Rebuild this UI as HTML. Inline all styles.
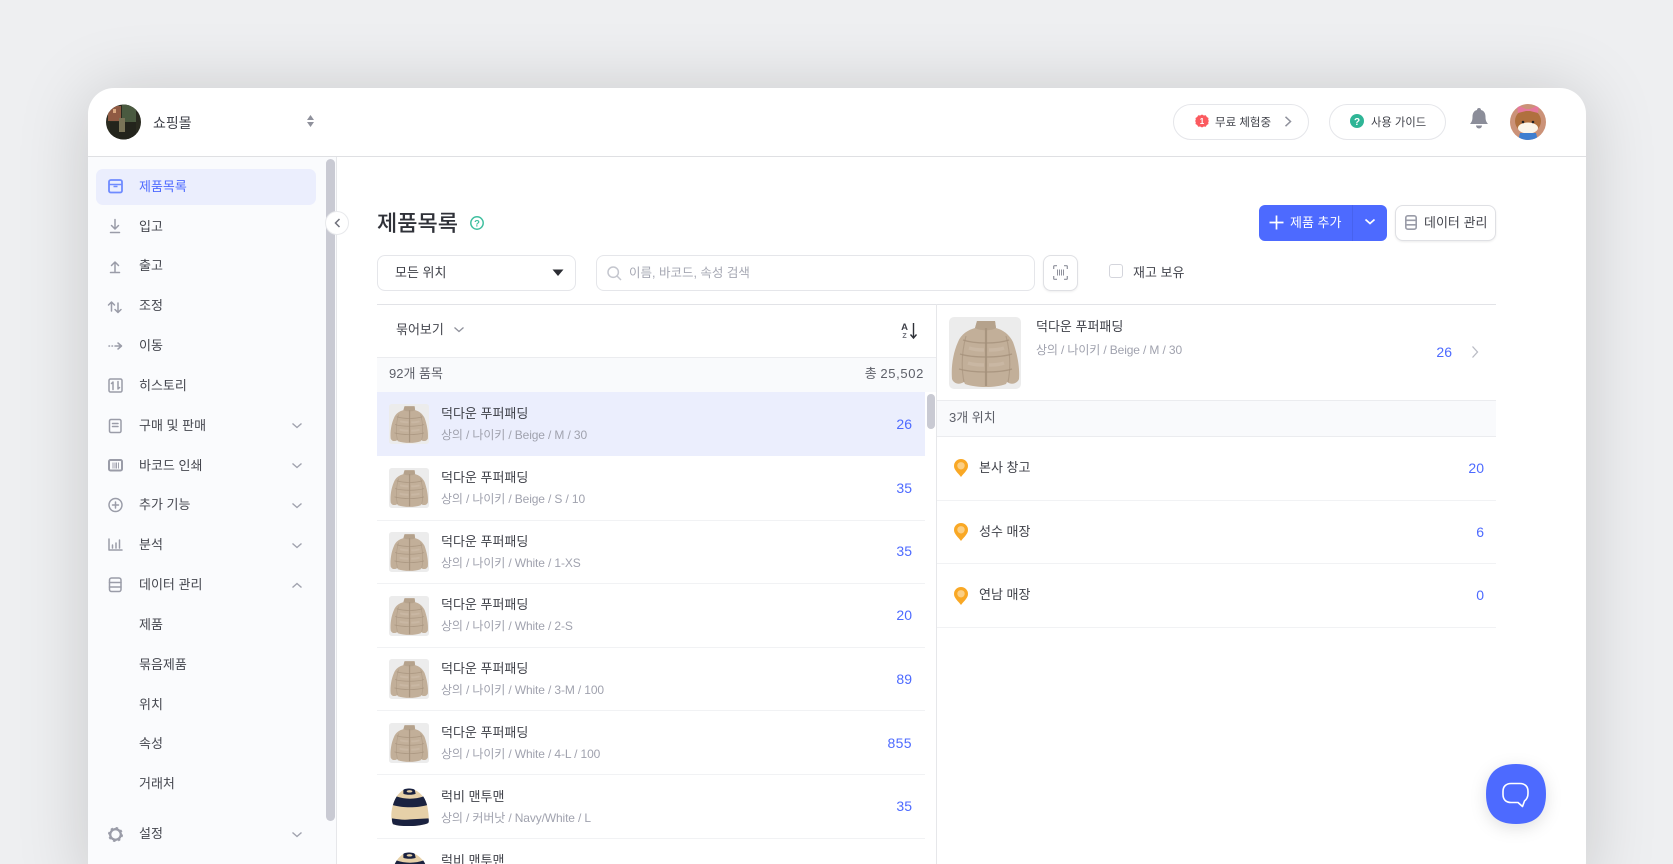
<!DOCTYPE html>
<html lang="ko"><head><meta charset="utf-8"><title>제품목록</title>
<style>
*{box-sizing:border-box;margin:0;padding:0}
html,body{width:1673px;height:864px;overflow:hidden;background:#eeeff1}
body{position:relative;font-family:"Liberation Sans","Noto Sans CJK KR",sans-serif;color:#3f4149;font-size:13px}
.a{position:absolute}
.t{position:absolute;white-space:nowrap;line-height:20px;height:20px}
.r{text-align:right}
#card{left:88px;top:88px;width:1498px;height:800px;background:#fff;border-radius:26px;box-shadow:0 4px 70px rgba(0,0,0,.17);overflow:hidden}
#layer{left:0;top:0;width:1673px;height:864px;overflow:hidden}
.line{position:absolute;background:#e6e7ea}
.m{font-size:13px;color:#44464e;left:139px}
.sub{font-size:12px;color:#a0a2ae;letter-spacing:-.13px}
.num{font-size:14px;color:#4d6aff;text-align:right}
.box{position:absolute;background:#fff;border:1px solid #e5e6ea;border-radius:8px}
svg{position:absolute;overflow:visible}
.ic{fill:none;stroke:#9a9ca8;stroke-width:1.5;stroke-linecap:round;stroke-linejoin:round}
</style></head><body>
<svg width="0" height="0" style="position:absolute"><defs>
<symbol id="jk" viewBox="0 0 72 72">
<rect width="72" height="72" rx="5" fill="#ececec"/>
<path d="M28 4 L46 4 L47 11 C54 13 60 17 64 25 C68 36 71 50 70 62 C68 67 62 68 58 65 L57 67 C46 71 28 71 16 67 L15 65 C10 68 5 67 3 62 C2 50 4 36 9 25 C12 17 19 13 26 11 Z" fill="#c2af99"/>
<path d="M28 4 L46 4 L47 11 C43 14 31 14 26 11 Z" fill="#b5a28c"/>
<path d="M37 11 V69" stroke="#a8957f" stroke-width="2.200"/>
<path d="M14 23 C26 27 48 27 60 23 M11 37 C24 41 50 41 63 37 M10 52 C24 56 50 56 63 52" stroke="#a38f79" stroke-width="1.300" fill="none" opacity=".75"/>
<path d="M17 19 C13 34 12 50 15 65 M57 19 C61 34 62 50 59 65" stroke="#a38f79" stroke-width="1.100" fill="none" opacity=".6"/>
<path d="M20 31 C26 33 31 33 35 33 M40 33 C45 33 50 33 55 31 M19 46 C25 48 31 48 35 48 M40 48 C45 48 50 48 55 46" stroke="#d2c2af" stroke-width="3.500" fill="none" opacity=".45"/>
</symbol>
<symbol id="rg" viewBox="0 0 40 40">
<path d="M13 2 H25 C33 6 38 13 39 24 C40 30 40 35 39 37 C30 41 9 41 2 38 C0 33 0 28 1 22 C3 12 7 6 13 2 Z" fill="#e6d0a8"/>
<path d="M6 9 C14 12 26 12 34 9 C36 12 37 15 38 18 C28 21 12 21 2 18 C3 15 4 12 6 9 Z" fill="#1a2240"/>
<path d="M1 32 C8 33 14 34 20 33 L39.500 32 C40 34 40 36 39 37 C30 41 9 41 2 38 C1 36 1 34 1 32 Z" fill="#1a2240"/>
<path d="M13 2 C15 0 23 0 25 2 L26 6 C23 7.500 16 7.500 13 6 Z" fill="#1a2240"/>
<ellipse cx="19.500" cy="3.500" rx="3" ry="1.300" fill="#e6d0a8"/>
</symbol>
<symbol id="pin" viewBox="0 0 14 18">
<path d="M7 18 C4 14 0 11 0 7 A7 7 0 0 1 14 7 C14 11 10 14 7 18Z" fill="#f9a825"/><circle cx="7" cy="6.800" r="3.700" fill="#fbcf85"/>
</symbol>
<clipPath id="c1"><circle cx="123.500" cy="122" r="17.500"/></clipPath>
<clipPath id="c2"><circle cx="1528" cy="122" r="18"/></clipPath>
</defs></svg>

<div class="a" id="card"></div>
<div class="a" id="layer">

<!-- header -->
<div class="line" style="left:88px;top:156px;width:1498px;height:1px;background:#dfe0e3"></div>
<svg style="left:0;top:0" width="1673" height="200">
<g clip-path="url(#c1)"><rect x="105" y="104" width="37" height="36" fill="#2a2b20"/><rect x="108" y="106" width="13" height="15" fill="#8f5a43"/><rect x="122" y="104" width="14" height="20" fill="#4a5a40"/><rect x="110" y="122" width="26" height="18" fill="#23241c"/><rect x="119" y="118" width="6" height="14" fill="#7a7458"/><rect x="113" y="109" width="3" height="4" fill="#d9a77f"/></g>
<path d="M310.500 115l3.500 5h-7zM310.500 127l3.500-5h-7z" fill="#8f919c"/>
<g clip-path="url(#c2)"><rect x="1510" y="104" width="36" height="36" fill="#cb9278"/><ellipse cx="1528" cy="121" rx="13" ry="12" fill="#b0703e"/><path d="M1517 105l9 4h4l9-4-1 8-8-2h-4l-8 2z" fill="#e5789c"/><ellipse cx="1528" cy="128" rx="10" ry="5.500" fill="#fbf6ea"/><path d="M1520 133h16l2 8h-20z" fill="#3f7fd0"/><circle cx="1523" cy="122" r="1.300" fill="#222"/><circle cx="1533" cy="122" r="1.300" fill="#222"/></g>
</svg>
<div class="t" style="left:153px;top:113px;font-size:14px;color:#3f4149">쇼핑몰</div>

<div class="box" style="left:1173px;top:104px;width:136px;height:36px;border-radius:18px"></div>
<svg style="left:1195px;top:114px" width="14" height="14"><path d="M7 0.500l1.800 1 2-.3 1 1.800 1.700 1-.3 2 .8 1-.8 1 .3 2-1.700 1-1 1.800-2-.3-1.800 1-1.800-1-2 .3-1-1.800-1.700-1 .3-2-.8-1 .8-1-.3-2 1.700-1 1-1.800 2 .3z" fill="#fb5a5f"/><text x="7" y="10" text-anchor="middle" font-size="8" font-weight="700" fill="#fff" font-family="Liberation Sans">1</text></svg>
<div class="t" style="left:1215px;top:113px;font-size:11.500px;color:#3f4149">무료 체험중</div>
<svg style="left:1284px;top:116px" width="8" height="11"><path d="M1.500 .8l5 4.700-5 4.700" fill="none" stroke="#8f919c" stroke-width="1.500"/></svg>

<div class="box" style="left:1329px;top:104px;width:117px;height:36px;border-radius:18px"></div>
<svg style="left:1350px;top:114px" width="14" height="14"><circle cx="7" cy="7" r="7" fill="#2fb596"/><text x="7" y="11" text-anchor="middle" font-size="10" font-weight="700" fill="#fff" font-family="Liberation Sans">?</text></svg>
<div class="t" style="left:1371px;top:113px;font-size:11.300px;color:#3f4149">사용 가이드</div>
<svg style="left:1470px;top:108px" width="18" height="22"><path d="M9 0c1.200 0 2 .8 2 2 3.200.8 4.500 3.500 4.500 6.800 0 3.700 .8 5.200 2.500 7.200H0c1.700-2 2.500-3.500 2.500-7.200C2.500 5.500 3.800 2.800 7 2c0-1.200.8-2 2-2z" fill="#8b8d99"/><path d="M6 17.500h6a3 3 0 0 1-6 0z" fill="#8b8d99"/></svg>

<!-- sidebar -->
<div class="a" style="left:88px;top:157px;width:248px;height:707px;background:#fafbfd"></div>
<div class="line" style="left:336px;top:157px;width:1px;height:707px"></div>
<div class="a" style="left:96px;top:169px;width:220px;height:36px;background:#ebeefd;border-radius:7px"></div>
<div class="a" style="left:326px;top:159px;width:9px;height:662px;background:#c9cad3;border-radius:5px"></div>
<div class="a" style="left:325px;top:211px;width:24px;height:24px;background:#fff;border:1px solid #e8e9ec;border-radius:50%"></div>
<svg style="left:334px;top:218px" width="7" height="10"><path d="M5.500 1L1.500 5l4 4" fill="none" stroke="#6f717b" stroke-width="1.500"/></svg>

<div class="t m" style="top:177px;color:#4d6aff">제품목록</div>
<div class="t m" style="top:217px">입고</div>
<div class="t m" style="top:256px">출고</div>
<div class="t m" style="top:296px">조정</div>
<div class="t m" style="top:336px">이동</div>
<div class="t m" style="top:376px">히스토리</div>
<div class="t m" style="top:416px">구매 및 판매</div>
<div class="t m" style="top:456px">바코드 인쇄</div>
<div class="t m" style="top:495px">추가 기능</div>
<div class="t m" style="top:535px">분석</div>
<div class="t m" style="top:575px">데이터 관리</div>
<div class="t m" style="top:615px">제품</div>
<div class="t m" style="top:655px">묶음제품</div>
<div class="t m" style="top:695px">위치</div>
<div class="t m" style="top:734px">속성</div>
<div class="t m" style="top:774px">거래처</div>
<div class="t m" style="top:824px">설정</div>

<svg style="left:0;top:0" width="340" height="864">
<g fill="none" stroke="#6f8bff" stroke-width="1.800" stroke-linejoin="round"><rect x="109" y="180" width="13" height="12.500" rx="1.800"/><path d="M109 184.500h13M113.500 186.500h4" stroke-width="1.400"/></g>
<g class="ic">
<path d="M115 219.500v9.500M111.500 225.500l3.500 3.500 3.500-3.500M110.500 232.500h9"/>
<path d="M115 271.500v-9.500M111.500 265.500l3.500-3.500 3.500 3.500M110.500 272.500h9"/>
<path d="M111.500 311v-9M108.500 305l3-3 3 3M118 303v9.500M115 309.500l3 3 3-3"/>
<path d="M109 346h.5M112 346h.5M115 346h6M118 343l3.500 3-3.500 3"/>
<rect x="109" y="379" width="13" height="13" rx="1.500"/><path d="M113 389.500v-7.500l-1.500 1.500M118 381.500v7.500l1.500-1.500"/>
<rect x="109.500" y="419.500" width="11.500" height="13" rx="1.500"/><path d="M112.500 423.500h5.500M112.500 426.500h5.500"/>
<rect x="109" y="460" width="13" height="10.500" rx="1.500" stroke-width="2"/>
<circle cx="115.500" cy="505" r="6.500"/><path d="M115.500 502v6M112.500 505h6"/>
<path d="M109 539v11h13M112.500 548v-3M116 548v-5M119.500 548v-8"/>
<rect x="109.500" y="578" width="11.500" height="13.500" rx="2"/><path d="M109.500 582.500h11.500M109.500 587h11.500"/>
</g>
<circle cx="115.500" cy="834.500" r="5.300" fill="none" stroke="#9a9ca8" stroke-width="2.300"/>
<circle cx="115.500" cy="834.500" r="6.800" fill="none" stroke="#9a9ca8" stroke-width="1.400" stroke-dasharray="2.500 2.830"/>
<path d="M113 462.500v6M115 462.500v6M116.500 462.500v6M118.500 462.500v6" stroke="#a0a2ae" stroke-width="1"/>
<g fill="none" stroke="#a0a2ae" stroke-width="1.400">
<path d="M292.500 423.500l4.500 4 4.500-4M292.500 463.500l4.500 4 4.500-4M292.500 503.500l4.500 4 4.500-4M292.500 543.500l4.500 4 4.500-4M292.500 587.500l4.500-4 4.500 4M292.500 832.500l4.500 4 4.500-4"/>
</g>
</svg>

<!-- page head -->
<div class="t" style="left:377px;top:209px;height:30px;line-height:30px;font-size:22px;font-weight:500;color:#2f3138">제품목록</div>
<svg style="left:470px;top:216px" width="14" height="14"><circle cx="7" cy="7" r="6.200" fill="none" stroke="#3fbf9f" stroke-width="1.500"/><text x="7" y="10.500" text-anchor="middle" font-size="9.500" font-weight="700" fill="#3fbf9f" font-family="Liberation Sans">?</text></svg>

<div class="a" style="left:1259px;top:205px;width:128px;height:36px;background:#4d6aff;border-radius:6px"></div>
<div class="a" style="left:1352px;top:205px;width:1px;height:36px;background:#4762ee"></div>
<svg style="left:1269px;top:215px" width="15" height="15"><path d="M7.500 0.500v14M.5 7.500h14" stroke="#fff" stroke-width="1.700"/></svg>
<div class="t" style="left:1290px;top:213px;font-size:13px;color:#fff">제품 추가</div>
<svg style="left:1364px;top:218px" width="12" height="8"><path d="M1.500 1.500l4.500 4 4.500-4" fill="none" stroke="#fff" stroke-width="1.700"/></svg>

<div class="box" style="left:1395px;top:205px;width:101px;height:36px;border-color:#dfe0e4;box-shadow:0 1px 2px rgba(0,0,0,.08)"></div>
<svg style="left:1405px;top:215px" width="12" height="15"><g fill="none" stroke="#9a9ca8" stroke-width="1.600"><rect x="0.800" y="0.800" width="10.400" height="13.400" rx="2"/><path d="M.8 5.300h10.400M.8 9.800h10.400"/></g></svg>
<div class="t" style="left:1424px;top:213px;font-size:13px;color:#44464e">데이터 관리</div>

<!-- filters -->
<div class="box" style="left:377px;top:255px;width:199px;height:36px"></div>
<div class="t" style="left:395px;top:263px;font-size:13px;color:#3f4149">모든 위치</div>
<svg style="left:552px;top:269px" width="12" height="8"><path d="M.5.500h11L6 7z" fill="#2b2d33"/></svg>
<div class="box" style="left:596px;top:255px;width:439px;height:36px"></div>
<svg style="left:607px;top:266px" width="15" height="15"><circle cx="6.200" cy="6.200" r="5.200" fill="none" stroke="#c4c6ce" stroke-width="1.500"/><path d="M10 10l4 4" stroke="#c4c6ce" stroke-width="1.500"/></svg>
<div class="t" style="left:629px;top:263px;font-size:12.500px;color:#a6a8b3">이름, 바코드, 속성 검색</div>
<div class="box" style="left:1043px;top:255px;width:35px;height:36px;border-color:#dfe0e4;box-shadow:0 1px 2px rgba(0,0,0,.07)"></div>
<svg style="left:1053px;top:265px" width="15" height="15"><path d="M.7 4V1.500a.8.800 0 0 1 .8-.8H4M11 .7h2.500a.8.800 0 0 1 .8.800V4M14.300 11v2.500a.8.800 0 0 1-.8.800H11M4 14.300H1.500a.8.800 0 0 1-.8-.8V11" fill="none" stroke="#8f919c" stroke-width="1.200"/><path d="M4.500 4.500v6M6.500 4.500v6M8.500 4.500v6M10.500 4.500v6" stroke="#8f919c" stroke-width="1"/></svg>
<div class="a" style="left:1109px;top:264px;width:14px;height:14px;background:#fff;border:1.500px solid #d4d5dc;border-radius:3px"></div>
<div class="t" style="left:1133px;top:263px;font-size:13px;color:#44464e">재고 보유</div>

<!-- table frame -->
<div class="line" style="left:377px;top:304px;width:1119px;height:1px;background:#e2e3e7"></div>
<div class="line" style="left:936px;top:304px;width:1px;height:560px"></div>
<div class="t" style="left:396px;top:320px;font-size:13px;color:#44464e">묶어보기</div>
<svg style="left:453px;top:326px" width="12" height="8"><path d="M1.500 1.500l4.500 4 4.500-4" fill="none" stroke="#8f919c" stroke-width="1.300"/></svg>
<div class="t" style="left:901px;top:323px;font-size:9.500px;line-height:10px;font-weight:700;color:#3f4149;text-align:center;width:7px;height:10px">A</div>
<div class="t" style="left:901px;top:333px;font-size:7px;line-height:8px;font-weight:700;color:#6d6f79;text-align:center;width:7px;height:8px">Z</div>
<svg style="left:909px;top:322px" width="10" height="20"><path d="M4.500 1v15M1.500 12.500L4.500 16l3-3.500" fill="none" stroke="#2f3138" stroke-width="1.400"/></svg>

<div class="a" style="left:377px;top:357px;width:559px;height:35px;background:#f9fafc;border-top:1px solid #ebecef"></div>
<div class="t" style="left:389px;top:364px;font-size:13px;color:#5e6069">92개 품목</div>
<div class="t r" style="right:749px;top:364px;font-size:13px;color:#5e6069">총 <span style="letter-spacing:.65px">25,502</span></div>

<div class="a" style="left:377px;top:392px;width:548px;height:64px;background:#ebeefd"></div>
<div class="a" style="left:927px;top:394px;width:8px;height:35px;background:#c9cad3;border-radius:4px"></div>
<div class="line" style="left:377px;top:520px;width:548px;height:1px;background:#f1f2f4"></div>
<div class="line" style="left:377px;top:583px;width:548px;height:1px;background:#f1f2f4"></div>
<div class="line" style="left:377px;top:647px;width:548px;height:1px;background:#f1f2f4"></div>
<div class="line" style="left:377px;top:710px;width:548px;height:1px;background:#f1f2f4"></div>
<div class="line" style="left:377px;top:774px;width:548px;height:1px;background:#f1f2f4"></div>
<div class="line" style="left:377px;top:838px;width:548px;height:1px;background:#f1f2f4"></div>

<svg style="left:389px;top:404px" width="40" height="40"><use href="#jk" width="40" height="40"/></svg>
<svg style="left:389px;top:468px" width="40" height="40"><use href="#jk" width="40" height="40"/></svg>
<svg style="left:389px;top:532px" width="40" height="40"><use href="#jk" width="40" height="40"/></svg>
<svg style="left:389px;top:596px" width="40" height="40"><use href="#jk" width="40" height="40"/></svg>
<svg style="left:389px;top:659px" width="40" height="40"><use href="#jk" width="40" height="40"/></svg>
<svg style="left:389px;top:723px" width="40" height="40"><use href="#jk" width="40" height="40"/></svg>
<svg style="left:391px;top:788px" width="38" height="38"><use href="#rg" width="38" height="38"/></svg>
<svg style="left:391px;top:852px" width="38" height="38"><use href="#rg" width="38" height="38"/></svg>

<div class="t" style="left:441px;top:404px;font-size:13px">덕다운 푸퍼패딩</div><div class="t sub" style="left:441px;top:425px">상의 / 나이키 / Beige / M / 30</div><div class="t num" style="right:761px;top:414px">26</div>
<div class="t" style="left:441px;top:468px;font-size:13px">덕다운 푸퍼패딩</div><div class="t sub" style="left:441px;top:489px">상의 / 나이키 / Beige / S / 10</div><div class="t num" style="right:761px;top:478px">35</div>
<div class="t" style="left:441px;top:532px;font-size:13px">덕다운 푸퍼패딩</div><div class="t sub" style="left:441px;top:553px">상의 / 나이키 / White / 1-XS</div><div class="t num" style="right:761px;top:541px">35</div>
<div class="t" style="left:441px;top:595px;font-size:13px">덕다운 푸퍼패딩</div><div class="t sub" style="left:441px;top:616px">상의 / 나이키 / White / 2-S</div><div class="t num" style="right:761px;top:605px">20</div>
<div class="t" style="left:441px;top:659px;font-size:13px">덕다운 푸퍼패딩</div><div class="t sub" style="left:441px;top:680px">상의 / 나이키 / White / 3-M / 100</div><div class="t num" style="right:761px;top:669px">89</div>
<div class="t" style="left:441px;top:723px;font-size:13px">덕다운 푸퍼패딩</div><div class="t sub" style="left:441px;top:744px">상의 / 나이키 / White / 4-L / 100</div><div class="t num" style="right:761px;top:733px;letter-spacing:.4px">855</div>
<div class="t" style="left:441px;top:787px;font-size:13px">럭비 맨투맨</div><div class="t sub" style="left:441px;top:808px">상의 / 커버낫 / Navy/White / L</div><div class="t num" style="right:761px;top:796px">35</div>
<div class="t" style="left:441px;top:851px;font-size:13px">럭비 맨투맨</div>

<!-- right panel -->
<svg style="left:949px;top:317px" width="72" height="72"><use href="#jk" width="72" height="72"/></svg>
<div class="t" style="left:1036px;top:317px;font-size:13px">덕다운 푸퍼패딩</div>
<div class="t sub" style="left:1036px;top:340px">상의 / 나이키 / Beige / M / 30</div>
<div class="t num" style="right:221px;top:342px">26</div>
<svg style="left:1471px;top:345px" width="8" height="14"><path d="M1.500 1.500l5 5.500-5 5.500" fill="none" stroke="#b9bbc4" stroke-width="1.300"/></svg>
<div class="a" style="left:937px;top:400px;width:559px;height:37px;background:#f9fafc;border-top:1px solid #ebecef;border-bottom:1px solid #ebecef"></div>
<div class="t" style="left:949px;top:408px;font-size:13px;color:#5e6069">3개 위치</div>

<svg style="left:954px;top:459px" width="14" height="18"><use href="#pin" width="14" height="18"/></svg>
<div class="t" style="left:979px;top:458px;font-size:13px">본사 창고</div><div class="t num" style="right:189px;top:458px">20</div>
<div class="line" style="left:937px;top:500px;width:559px;height:1px;background:#f1f2f4"></div>
<svg style="left:954px;top:523px" width="14" height="18"><use href="#pin" width="14" height="18"/></svg>
<div class="t" style="left:979px;top:522px;font-size:13px">성수 매장</div><div class="t num" style="right:189px;top:522px">6</div>
<div class="line" style="left:937px;top:563px;width:559px;height:1px;background:#f1f2f4"></div>
<svg style="left:954px;top:587px" width="14" height="18"><use href="#pin" width="14" height="18"/></svg>
<div class="t" style="left:979px;top:585px;font-size:13px">연남 매장</div><div class="t num" style="right:189px;top:585px">0</div>
<div class="line" style="left:937px;top:627px;width:559px;height:1px;background:#f1f2f4"></div>

<!-- chat -->
<svg style="left:1486px;top:764px;filter:drop-shadow(0 4px 8px rgba(0,0,0,.12))" width="60" height="60"><path d="M30 0C50 0 60 10 60 30S50 60 30 60 0 50 0 30 10 0 30 0Z" fill="#4d6aff"/><path d="M25 19.500H34C39 19.500 42 22.500 42 27.500V29.500C42 33 40.500 35.500 38.500 37L36.500 42.500L32 38.500H25C20 38.500 17 35.500 17 30.500V27.500C17 22.500 20 19.500 25 19.500Z" fill="none" stroke="#fff" stroke-width="1.600" stroke-linejoin="round"/></svg>
</div>
</body></html>
